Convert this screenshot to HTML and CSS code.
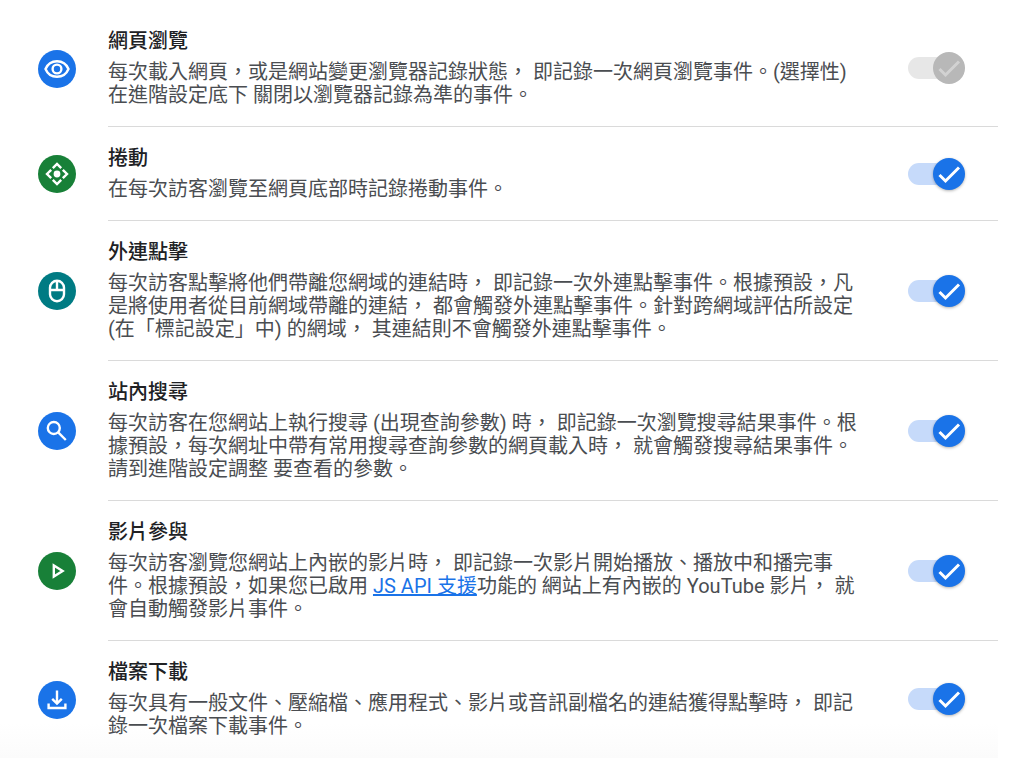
FILE: index.html
```html
<!DOCTYPE html>
<html lang="zh-Hant">
<head>
  <meta charset="UTF-8">
  <title>加強型評估</title>
  <meta name="viewport" content="width=device-width, initial-scale=1.0">
  <link rel="stylesheet" href="styles.css">
</head>
<body>
  <ul class="event-list">
    <li class="event">
      <svg class="event-icon blue" viewBox="0 0 38 38" aria-hidden="true">
        <path d="M7.500 19C9.600 14 13.900 11.200 19 11.200S28.400 14 30.500 19C28.400 24 24.100 26.800 19 26.800S9.600 24 7.500 19Z"/>
        <circle cx="19" cy="19" r="4.400"/>
      </svg>
      <div class="event-body">
        <div class="event-text">
          <h3><label for="pageView">網頁瀏覽</label></h3>
          <p>每次載入網頁，或是網站變更瀏覽器記錄狀態， 即記錄一次網頁瀏覽事件。(選擇性)<br>在進階設定底下 關閉以瀏覽器記錄為準的事件。</p>
        </div>
        <div class="switch">
          <input type="checkbox" id="pageView" checked disabled>
          <svg class="knob" viewBox="0 0 32 32" aria-hidden="true"><path d="M6.500 17l6 6L26 9.500"/></svg>
        </div>
      </div>
    </li>

    <li class="event">
      <svg class="event-icon green" viewBox="0 0 38 38" aria-hidden="true">
        <path d="M14.800 13.200L19 9l4.200 4.200M14.800 24.800L19 29l4.200-4.200M13.200 14.800L9 19l4.200 4.200M24.800 14.800L29 19l-4.200 4.200"/>
        <circle class="fill" cx="19" cy="19" r="2.200"/>
      </svg>
      <div class="event-body">
        <div class="event-text">
          <h3><label for="scroll">捲動</label></h3>
          <p>在每次訪客瀏覽至網頁底部時記錄捲動事件。</p>
        </div>
        <div class="switch">
          <input type="checkbox" id="scroll" checked>
          <svg class="knob" viewBox="0 0 32 32" aria-hidden="true"><path d="M6.500 17l6 6L26 9.500"/></svg>
        </div>
      </div>
    </li>

    <li class="event">
      <svg class="event-icon teal" viewBox="0 0 38 38" aria-hidden="true">
        <rect x="12" y="8.800" width="14" height="20.400" rx="7"/>
        <path d="M12 18h14M19 9v9"/>
      </svg>
      <div class="event-body">
        <div class="event-text">
          <h3><label for="outbound">外連點擊</label></h3>
          <p>每次訪客點擊將他們帶離您網域的連結時， 即記錄一次外連點擊事件。根據預設，凡<br>是將使用者從目前網域帶離的連結， 都會觸發外連點擊事件。針對跨網域評估所設定<br>(在「標記設定」中) 的網域， 其連結則不會觸發外連點擊事件。</p>
        </div>
        <div class="switch">
          <input type="checkbox" id="outbound" checked>
          <svg class="knob" viewBox="0 0 32 32" aria-hidden="true"><path d="M6.500 17l6 6L26 9.500"/></svg>
        </div>
      </div>
    </li>

    <li class="event">
      <svg class="event-icon blue" viewBox="0 0 38 38" aria-hidden="true">
        <circle cx="15.800" cy="16" r="6"/>
        <path d="M20.200 20.400l7.600 7.600"/>
      </svg>
      <div class="event-body">
        <div class="event-text">
          <h3><label for="search">站內搜尋</label></h3>
          <p>每次訪客在您網站上執行搜尋 (出現查詢參數) 時， 即記錄一次瀏覽搜尋結果事件。根<br>據預設，每次網址中帶有常用搜尋查詢參數的網頁載入時， 就會觸發搜尋結果事件。<br>請到進階設定調整 要查看的參數。</p>
        </div>
        <div class="switch">
          <input type="checkbox" id="search" checked>
          <svg class="knob" viewBox="0 0 32 32" aria-hidden="true"><path d="M6.500 17l6 6L26 9.500"/></svg>
        </div>
      </div>
    </li>

    <li class="event">
      <svg class="event-icon green" viewBox="0 0 38 38" aria-hidden="true">
        <path d="M15.800 13.500v11l8.800-5.500z"/>
      </svg>
      <div class="event-body">
        <div class="event-text">
          <h3><label for="video">影片參與</label></h3>
          <p>每次訪客瀏覽您網站上內嵌的影片時， 即記錄一次影片開始播放、播放中和播完事<br>件。根據預設，如果您已啟用 <a href="#">JS API 支援</a>功能的 網站上有內嵌的 YouTube 影片， 就<br>會自動觸發影片事件。</p>
        </div>
        <div class="switch">
          <input type="checkbox" id="video" checked>
          <svg class="knob" viewBox="0 0 32 32" aria-hidden="true"><path d="M6.500 17l6 6L26 9.500"/></svg>
        </div>
      </div>
    </li>

    <li class="event">
      <svg class="event-icon blue" viewBox="0 0 38 38" aria-hidden="true">
        <path d="M19 9.500v13M14.200 17.800l4.800 4.800 4.800-4.800M10.600 22.500v4.500h16.800v-4.500"/>
      </svg>
      <div class="event-body">
        <div class="event-text">
          <h3><label for="download">檔案下載</label></h3>
          <p>每次具有一般文件、壓縮檔、應用程式、影片或音訊副檔名的連結獲得點擊時， 即記<br>錄一次檔案下載事件。</p>
        </div>
        <div class="switch">
          <input type="checkbox" id="download" checked>
          <svg class="knob" viewBox="0 0 32 32" aria-hidden="true"><path d="M6.500 17l6 6L26 9.500"/></svg>
        </div>
      </div>
    </li>
  </ul>
</body>
</html>
```

FILE: styles.css
```css
* {
  box-sizing: border-box;
}
body {
  margin: 0;
  font-family: Roboto, "Noto Sans CJK TC", sans-serif;
  font-size: 20px;
  background: #ffffff;
  color: #4a4d51;
}
.event-list {
  list-style: none;
  margin: 0;
  padding: 10px 26px 0 0;
}
.event {
  display: flex;
  align-items: center;
  gap: 32px;
  padding-left: 38px;
}
.event:last-child {
  background: linear-gradient(#ffffff 70%, #fbfbfb);
}
.event-icon {
  flex: none;
  width: 38px;
  height: 38px;
  border-radius: 50%;
  fill: none;
  stroke: #ffffff;
  stroke-width: 2.4;
}
.event-icon .fill {
  fill: #ffffff;
}
.blue {
  background: #1a73e8;
}
.green {
  background: #188038;
}
.teal {
  background: #007b83;
}
.event-body {
  flex: 1;
  display: flex;
  align-items: center;
  justify-content: space-between;
  padding: 19px 33px 19px 0;
  border-bottom: 1px solid #dadada;
}
.event:last-child .event-body {
  border-color: transparent;
}
h3 {
  margin: 0 0 8px;
  font-size: 20px;
  font-weight: 500;
  line-height: 24px;
  color: #202124;
}
p {
  margin: 0;
  line-height: 23px;
}
a {
  color: #1a73e8;
  text-decoration: underline;
}

/* toggle */
.switch {
  position: relative;
  flex: none;
  width: 57px;
  height: 32px;
  display: flex;
  align-items: center;
}
.switch input {
  appearance: none;
  width: 46px;
  height: 22px;
  margin: 0;
  border-radius: 11px;
  background: #c6dafa;
  cursor: pointer;
}
.knob {
  position: absolute;
  top: 0;
  right: 0;
  width: 32px;
  height: 32px;
  border-radius: 50%;
  background: #1a73e8;
  box-shadow: 0 1px 3px rgba(0,0,0,0.3);
  fill: none;
  stroke: #ffffff;
  stroke-width: 3;
  pointer-events: none;
}
.switch input:disabled {
  background: #e7e7e7;
  cursor: default;
}
.switch input:disabled + .knob {
  background: #b8b8b8;
  box-shadow: none;
  stroke: #d2d2d2;
}
.switch input:not(:checked) + .knob {
  right: 25px;
  background: #ffffff;
}
```
